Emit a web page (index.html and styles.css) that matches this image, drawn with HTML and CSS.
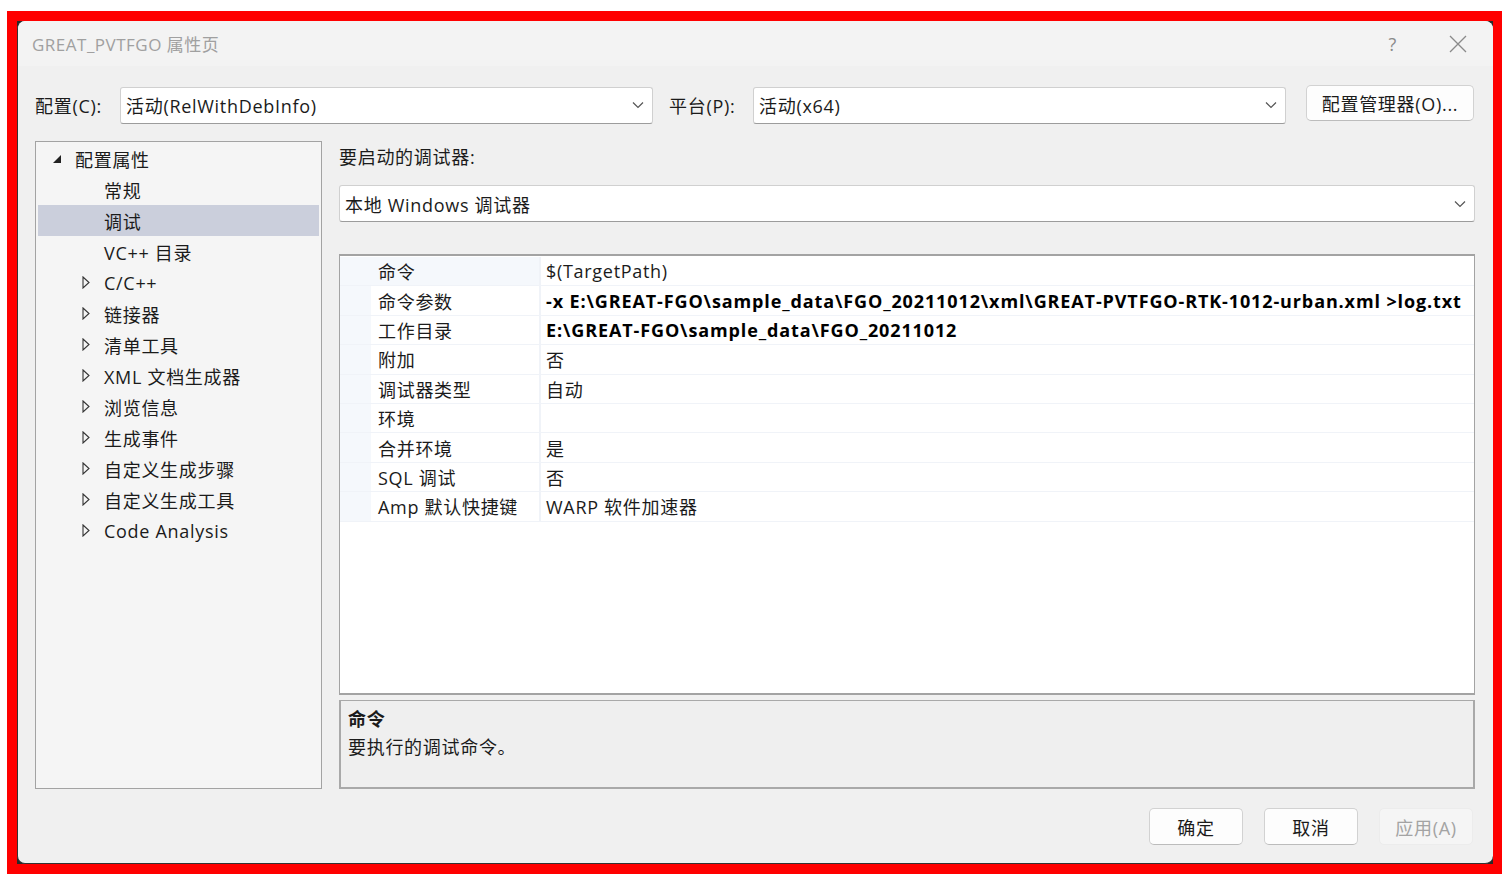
FILE: index.html
```html
<!DOCTYPE html>
<html lang="zh-CN">
<head>
    <meta charset="UTF-8">
    <meta name="viewport" content="width=device-width, initial-scale=1.0">
    <title>GREAT_PVTFGO 属性页</title>
    <link rel="stylesheet" href="styles.css">
</head>
<body>
    <div class="moldura">
        <div class="sombra">
            <div class="janela">
                <div class="titulo">
                    <span class="tituloTexto">GREAT_PVTFGO 属性页</span>
                    <div class="tituloBotoes">
                        <span class="ajuda">?</span>
                        <svg class="fechar" width="18" height="18" viewBox="0 0 18 18">
                            <path d="M1 1 L17 17 M17 1 L1 17" stroke="#8a8a8a" stroke-width="1.3" fill="none"/>
                        </svg>
                    </div>
                </div>

                <div class="corpo">
                    <div class="linhaConfig">
                        <span class="rotulo">配置(C):</span>
                        <div class="combo comboCurto">
                            <span>活动(RelWithDebInfo)</span>
                            <svg class="seta" width="12" height="8" viewBox="0 0 12 8"><path d="M1 1.5 L6 6.5 L11 1.5" stroke="#555" stroke-width="1.2" fill="none"/></svg>
                        </div>
                        <span class="rotulo rotuloPlat">平台(P):</span>
                        <div class="combo comboCurto">
                            <span>活动(x64)</span>
                            <svg class="seta" width="12" height="8" viewBox="0 0 12 8"><path d="M1 1.5 L6 6.5 L11 1.5" stroke="#555" stroke-width="1.2" fill="none"/></svg>
                        </div>
                        <button class="botao botaoGerente">配置管理器(O)...</button>
                    </div>

                    <div class="principal">
                        <div class="arvore">
                            <div class="no raiz"><svg class="tri" width="10" height="10" viewBox="0 0 10 10"><path d="M9 1 L9 9 L1 9 Z" fill="#222"/></svg>配置属性</div>
                            <div class="no folha">常规</div>
                            <div class="no folha selecionado">调试</div>
                            <div class="no folha">VC++ 目录</div>
                            <div class="no filho"><svg class="tri" width="8" height="13" viewBox="0 0 8 13"><path d="M1 1 L7 6.5 L1 12 Z" stroke="#333" stroke-width="1.1" fill="none"/></svg>C/C++</div>
                            <div class="no filho"><svg class="tri" width="8" height="13" viewBox="0 0 8 13"><path d="M1 1 L7 6.5 L1 12 Z" stroke="#333" stroke-width="1.1" fill="none"/></svg>链接器</div>
                            <div class="no filho"><svg class="tri" width="8" height="13" viewBox="0 0 8 13"><path d="M1 1 L7 6.5 L1 12 Z" stroke="#333" stroke-width="1.1" fill="none"/></svg>清单工具</div>
                            <div class="no filho"><svg class="tri" width="8" height="13" viewBox="0 0 8 13"><path d="M1 1 L7 6.5 L1 12 Z" stroke="#333" stroke-width="1.1" fill="none"/></svg>XML 文档生成器</div>
                            <div class="no filho"><svg class="tri" width="8" height="13" viewBox="0 0 8 13"><path d="M1 1 L7 6.5 L1 12 Z" stroke="#333" stroke-width="1.1" fill="none"/></svg>浏览信息</div>
                            <div class="no filho"><svg class="tri" width="8" height="13" viewBox="0 0 8 13"><path d="M1 1 L7 6.5 L1 12 Z" stroke="#333" stroke-width="1.1" fill="none"/></svg>生成事件</div>
                            <div class="no filho"><svg class="tri" width="8" height="13" viewBox="0 0 8 13"><path d="M1 1 L7 6.5 L1 12 Z" stroke="#333" stroke-width="1.1" fill="none"/></svg>自定义生成步骤</div>
                            <div class="no filho"><svg class="tri" width="8" height="13" viewBox="0 0 8 13"><path d="M1 1 L7 6.5 L1 12 Z" stroke="#333" stroke-width="1.1" fill="none"/></svg>自定义生成工具</div>
                            <div class="no filho"><svg class="tri" width="8" height="13" viewBox="0 0 8 13"><path d="M1 1 L7 6.5 L1 12 Z" stroke="#333" stroke-width="1.1" fill="none"/></svg>Code Analysis</div>
                        </div>

                        <div class="direita">
                            <div class="rotuloDepurador">要启动的调试器:</div>
                            <div class="combo comboLargo">
                                <span>本地 Windows 调试器</span>
                                <svg class="seta" width="12" height="8" viewBox="0 0 12 8"><path d="M1 1.5 L6 6.5 L11 1.5" stroke="#555" stroke-width="1.2" fill="none"/></svg>
                            </div>

                            <div class="grade">
                                <div class="prop ativa"><span class="margem"></span><span class="nome">命令</span><span class="valor">$(TargetPath)</span></div>
                                <div class="prop"><span class="margem"></span><span class="nome">命令参数</span><span class="valor forte">-x E:\GREAT-FGO\sample_data\FGO_20211012\xml\GREAT-PVTFGO-RTK-1012-urban.xml &gt;log.txt</span></div>
                                <div class="prop"><span class="margem"></span><span class="nome">工作目录</span><span class="valor forte">E:\GREAT-FGO\sample_data\FGO_20211012</span></div>
                                <div class="prop"><span class="margem"></span><span class="nome">附加</span><span class="valor">否</span></div>
                                <div class="prop"><span class="margem"></span><span class="nome">调试器类型</span><span class="valor">自动</span></div>
                                <div class="prop"><span class="margem"></span><span class="nome">环境</span><span class="valor"></span></div>
                                <div class="prop"><span class="margem"></span><span class="nome">合并环境</span><span class="valor">是</span></div>
                                <div class="prop"><span class="margem"></span><span class="nome">SQL 调试</span><span class="valor">否</span></div>
                                <div class="prop"><span class="margem"></span><span class="nome">Amp 默认快捷键</span><span class="valor">WARP 软件加速器</span></div>
                            </div>

                            <div class="descricao">
                                <div class="descTitulo">命令</div>
                                <div class="descTexto">要执行的调试命令。</div>
                            </div>
                        </div>
                    </div>

                    <div class="rodape">
                        <button class="botao">确定</button>
                        <button class="botao">取消</button>
                        <button class="botao desativado">应用(A)</button>
                    </div>
                </div>
            </div>
        </div>
    </div>
</body>
</html>
```

FILE: styles.css
```css
body {
    margin: 0;
    background: #ffffff;
    font-family: "Open Sans", "Noto Sans CJK SC", sans-serif;
    font-size: 18px;
    letter-spacing: 0.7px;
    color: #1b1b1b;
}
.moldura {
    margin: 11px 0 0 7px;
    width: 1495px;
    height: 863px;
    box-sizing: border-box;
    padding: 10px 9px 10px 10px;
    background: #ff0000;
}
.sombra {
    height: 100%;
    background: #2a2a2a;
}
.janela {
    height: 100%;
    box-sizing: border-box;
    display: flex;
    flex-direction: column;
    background: #f0f0f0;
    border-radius: 8px;
    border-left: 1px solid #333;
    border-bottom: 1px solid #333;
    overflow: hidden;
}

/* barra de titulo */
.titulo {
    height: 45px;
    flex-shrink: 0;
    display: flex;
    align-items: center;
    justify-content: space-between;
    padding: 0 26px 0 14px;
    background: #f3f3f3;
}
.tituloTexto {
    color: #a0a0a0;
    font-size: 17px;
    letter-spacing: 0.5px;
}
.tituloBotoes {
    display: flex;
    align-items: center;
    gap: 52px;
}
.ajuda {
    color: #8a8a8a;
    font-size: 18px;
}

.corpo {
    flex: 1;
    display: flex;
    flex-direction: column;
    padding: 20px 18px 18px 17px;
}

/* linha de configuracao */
.linhaConfig {
    display: flex;
    align-items: center;
    height: 38px;
}
.rotulo {
    width: 85px;
    flex-shrink: 0;
}
.rotuloPlat {
    margin-left: 16px;
    width: 84px;
}
.combo {
    display: flex;
    align-items: center;
    justify-content: space-between;
    box-sizing: border-box;
    height: 37px;
    flex-shrink: 0;
    padding: 0 8px 0 5px;
    background: #ffffff;
    border: 1px solid #d0d0d0;
    border-bottom-color: #9c9c9c;
    border-radius: 3px;
}
.comboCurto {
    width: 533px;
}
.botao {
    box-sizing: border-box;
    height: 37px;
    background: #fdfdfd;
    border: 1px solid #d2d2d2;
    border-bottom-color: #bcbcbc;
    border-radius: 5px;
    font-family: inherit;
    font-size: 18px;
    letter-spacing: 0.7px;
    color: #1b1b1b;
    padding: 0;
}
.botaoGerente {
    margin-left: 20px;
    width: 168px;
    height: 36px;
    align-self: flex-start;
    margin-top: -1px;
}

/* area principal */
.principal {
    display: flex;
    gap: 17px;
    margin-top: 17px;
    height: 648px;
}
.arvore {
    width: 287px;
    flex-shrink: 0;
    box-sizing: border-box;
    background: #f5f5f5;
    border: 1px solid #a3a3a3;
    padding: 1px 2px;
}
.no {
    height: 31px;
    display: flex;
    align-items: center;
    white-space: nowrap;
}
.raiz {
    padding-left: 14px;
}
.raiz .tri {
    margin-right: 13px;
}
.folha {
    padding-left: 66px;
}
.filho {
    padding-left: 44px;
}
.filho .tri {
    margin-right: 14px;
}
.selecionado {
    background: #cbcfdc;
}

.direita {
    flex: 1;
    display: flex;
    flex-direction: column;
}
.rotuloDepurador {
    height: 30px;
    flex-shrink: 0;
    display: flex;
    align-items: center;
}
.comboLargo {
    margin-top: 14px;
    height: 37px;
}

/* grade de propriedades */
.grade {
    margin-top: 32px;
    height: 441px;
    flex-shrink: 0;
    box-sizing: border-box;
    background: #ffffff;
    border: 1px solid #a3a3a3;
    border-top-width: 2px;
    border-bottom-width: 2px;
    padding-top: 1px;
}
.prop {
    height: 29.4px;
    box-sizing: border-box;
    display: flex;
    align-items: center;
    border-bottom: 1px solid #f0f3f8;
    white-space: nowrap;
}
.margem {
    width: 31px;
    height: 100%;
    flex-shrink: 0;
    background: #f5f8fc;
}
.nome {
    width: 170px;
    height: 100%;
    box-sizing: border-box;
    flex-shrink: 0;
    display: flex;
    align-items: center;
    padding-left: 7px;
    border-right: 2px solid #f0f3f8;
}
.ativa .nome {
    background: #f5f8fc;
}
.valor {
    padding-left: 5px;
}
.forte {
    font-weight: 700;
    letter-spacing: 0.88px;
    color: #000;
}

.descricao {
    margin-top: 5px;
    height: 89px;
    flex-shrink: 0;
    box-sizing: border-box;
    background: #efefef;
    border: 2px solid #a9a9a9;
    border-top-width: 1px;
    padding: 4px 7px;
}
.descTitulo {
    font-weight: 700;
    line-height: 28px;
}
.descTexto {
    line-height: 28px;
}

/* botoes do rodape */
.rodape {
    display: flex;
    justify-content: flex-end;
    gap: 21px;
    margin-top: auto;
    padding-right: 2px;
}
.rodape .botao {
    width: 94px;
}
.desativado {
    background: #f5f5f5;
    border-color: #ececec;
    color: #a3a3a3;
}
```
